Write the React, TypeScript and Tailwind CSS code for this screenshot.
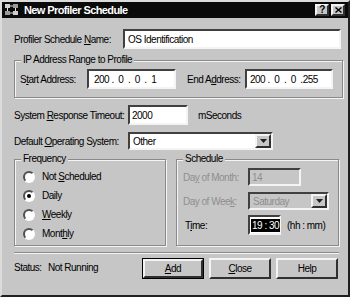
import React from 'react';

const sunken =
  'border-2 border-t-[#404040] border-l-[#404040] border-b-[#f4f4f4] border-r-[#f4f4f4] bg-white';
const raised =
  'border-2 border-t-[#f4f4f4] border-l-[#f4f4f4] border-b-[#303030] border-r-[#303030] bg-[#c6c6c6]';

function U({ children }: { children: React.ReactNode }) {
    return <span className="underline underline-offset-1">{children}</span>;
}

function Arrow() {
    return (
        <div className={`${raised} w-[16px] h-full shrink-0 flex items-center justify-center`}>
            <svg width="7" height="4" viewBox="0 0 7 4">
                <path d="M0 0h7L3.5 4z" fill="#202020" />
            </svg>
        </div>
    );
}

function Radio({ checked, children }: { checked?: boolean; children: React.ReactNode }) {
    return (
        <div className="flex items-center gap-[7px] h-[19px]">
            <div className="w-[12px] h-[12px] shrink-0 rounded-full border-2 border-t-[#505050] border-l-[#505050] border-b-white border-r-white bg-white flex items-center justify-center">
                {checked && <div className="w-[4px] h-[4px] rounded-full bg-black" />}
            </div>
            <span className="whitespace-nowrap">{children}</span>
        </div>
    );
}

function Group({ title, className, children }: { title: string; className: string; children: React.ReactNode }) {
    return (
        <div className={`relative shrink-0 border border-[#8a8a8a] shadow-[inset_1px_1px_0_#f4f4f4,1px_1px_0_#f4f4f4] ${className}`}>
            <span className="absolute -top-[8px] left-[6px] px-[2px] bg-[#c6c6c6] leading-[14px] whitespace-nowrap">{title}</span>
            {children}
        </div>
    );
}

function Button({ children, primary }: { children: React.ReactNode; primary?: boolean }) {
    return (
        <div className={`w-[62px] h-[21px] ${primary ? 'border border-black' : ''}`}>
            <div className={`${raised} w-full h-full flex items-center justify-center`}>{children}</div>
        </div>
    );
}

function Label({ w, className = '', children }: { w: string; className?: string; children: React.ReactNode }) {
    return <span className={`${w} shrink-0 whitespace-nowrap ${className}`}>{children}</span>;
}

export default function App() {
    return (
        <div
            className="w-[350px] h-[297px] bg-[#c6c6c6] border-2 border-t-[#dcdcdc] border-l-[#dcdcdc] border-b-[#202020] border-r-[#202020] text-[10px] text-black tracking-[-0.5px] overflow-hidden"
            style={{ fontFamily: '"Liberation Sans", Arial, sans-serif' }}
        >
            {/* Title bar */}
            <div className="h-[16px] bg-[#0a0a0a] flex items-center pl-[2px] pr-[3px]">
                <svg width="16" height="14" viewBox="0 0 16 14" className="mr-[4px]">
                    <rect x="1" y="1" width="5" height="4" fill="#cfcfcf" />
                    <rect x="9" y="1" width="5" height="4" fill="#9a9a9a" />
                    <rect x="1" y="8" width="5" height="4" fill="#9a9a9a" />
                    <rect x="9" y="8" width="5" height="4" fill="#cfcfcf" />
                    <path d="M3.5 5v3M11.5 5v3M6 3h3M6 10h3" stroke="#e0e0e0" strokeWidth="1" />
                </svg>
                <span className="text-white font-bold text-[11px] tracking-[-0.6px] whitespace-nowrap">New Profiler Schedule</span>
                <div className="ml-auto flex gap-[2px]">
                    <div className={`${raised} w-[14px] h-[12px] flex items-center justify-center text-[10px] font-bold leading-none`}>?</div>
                    <div className={`${raised} w-[14px] h-[12px] flex items-center justify-center`}>
                        <svg width="7" height="6" viewBox="0 0 7 6">
                            <path d="M0.5 0.5l6 5M6.5 0.5l-6 5" stroke="#000" strokeWidth="1.4" />
                        </svg>
                    </div>
                </div>
            </div>

            <div className="pl-[12px] pr-[7px]">
                {/* Name */}
                <div className="flex items-center mt-[11px] h-[20px]">
                    <Label w="w-[109px]">
                        Profiler Schedule <U>N</U>ame:
                    </Label>
                    <div className={`${sunken} flex-1 h-[20px] flex items-center px-[3px]`}>OS Identification</div>
                </div>

                {/* IP range */}
                <Group title="IP Address Range to Profile" className="mt-[11px] h-[38px] w-[329px] flex items-center pl-[5px]">
                    <Label w="w-[67px]">
                        S<U>t</U>art Address:
                    </Label>
                    <div className={`${sunken} w-[89px] h-[20px] flex items-center px-[5px] whitespace-pre`}>200 .  0  .  0  .  1</div>
                    <Label w="w-[58px]" className="ml-[11px]">
                        End A<U>d</U>dress:
                    </Label>
                    <div className={`${sunken} w-[88px] h-[20px] flex items-center px-[3px] whitespace-pre`}>200 .  0  .  0  .255</div>
                </Group>

                {/* Timeout */}
                <div className="flex items-center mt-[7px] h-[20px]">
                    <Label w="w-[114px]">
                        System <U>R</U>esponse Timeout:
                    </Label>
                    <div className={`${sunken} w-[60px] h-[20px] flex items-center px-[2px]`}>2000</div>
                    <span className="ml-[10px]">mSeconds</span>
                </div>

                {/* OS */}
                <div className="flex items-center mt-[7px] h-[18px]">
                    <Label w="w-[114px]">
                        Default <U>O</U>perating System:
                    </Label>
                    <div className={`${sunken} w-[145px] h-[18px] flex items-center pl-[3px]`}>
                        <span className="flex-1">Other</span>
                        <Arrow />
                    </div>
                </div>

                {/* Frequency / Schedule */}
                <div className="flex mt-[9px] gap-[10px]">
                    <Group title="Frequency" className="w-[152px] h-[87px] pt-[7px] pl-[8px]">
                        <Radio>
                            Not <U>S</U>cheduled
                        </Radio>
                        <Radio checked>Daily</Radio>
                        <Radio>
                            <U>W</U>eekly
                        </Radio>
                        <Radio>
                            Mont<U>h</U>ly
                        </Radio>
                    </Group>
                    <Group title="Schedule" className="w-[163px] h-[87px] pt-[8px] pl-[6px]">
                        <div className="flex items-center h-[18px] text-[#8e8e8e]">
                            <Label w="w-[65px]">
                                Da<U>y</U> of Month:
                            </Label>
                            <div className="w-[53px] h-[18px] border-2 border-t-[#404040] border-l-[#404040] border-b-[#f4f4f4] border-r-[#f4f4f4] bg-[#c6c6c6] flex items-center px-[2px]">
                                14
                            </div>
                        </div>
                        <div className="flex items-center h-[18px] mt-[6px] text-[#8e8e8e]">
                            <Label w="w-[65px]">
                                Day of Wee<U>k</U>:
                            </Label>
                            <div className="w-[81px] h-[18px] border-2 border-t-[#404040] border-l-[#404040] border-b-[#f4f4f4] border-r-[#f4f4f4] bg-[#c6c6c6] flex items-center pl-[3px]">
                                <span className="flex-1">Saturday</span>
                                <Arrow />
                            </div>
                        </div>
                        <div className="flex items-center h-[20px] mt-[5px]">
                            <Label w="w-[65px]" className="pl-[2px]">
                                T<U>i</U>me:
                            </Label>
                            <div className={`${sunken} w-[33px] h-[20px] flex items-center px-[1px]`}>
                                <span className="bg-black text-white px-[1px] leading-[13px] whitespace-pre">19 : 30</span>
                            </div>
                            <span className="ml-[6px] whitespace-nowrap">(hh : mm)</span>
                        </div>
                    </Group>
                </div>

                {/* Separator */}
                <div className="mt-[6px] w-[325px] h-[2px] border-t border-t-[#8a8a8a] border-b border-b-[#f4f4f4]" />

                {/* Status / buttons */}
                <div className="flex items-center mt-[4px]">
                    <Label w="w-[34px]" className="-mt-[2px]">Status:</Label>
                    <Label w="w-[94px]" className="-mt-[2px]">Not Running</Label>
                    <div className="flex gap-[5px]">
                        <Button primary>
                            <U>A</U>dd
                        </Button>
                        <Button>
                            <U>C</U>lose
                        </Button>
                        <Button>Help</Button>
                    </div>
                </div>
            </div>
        </div>
    );
}
